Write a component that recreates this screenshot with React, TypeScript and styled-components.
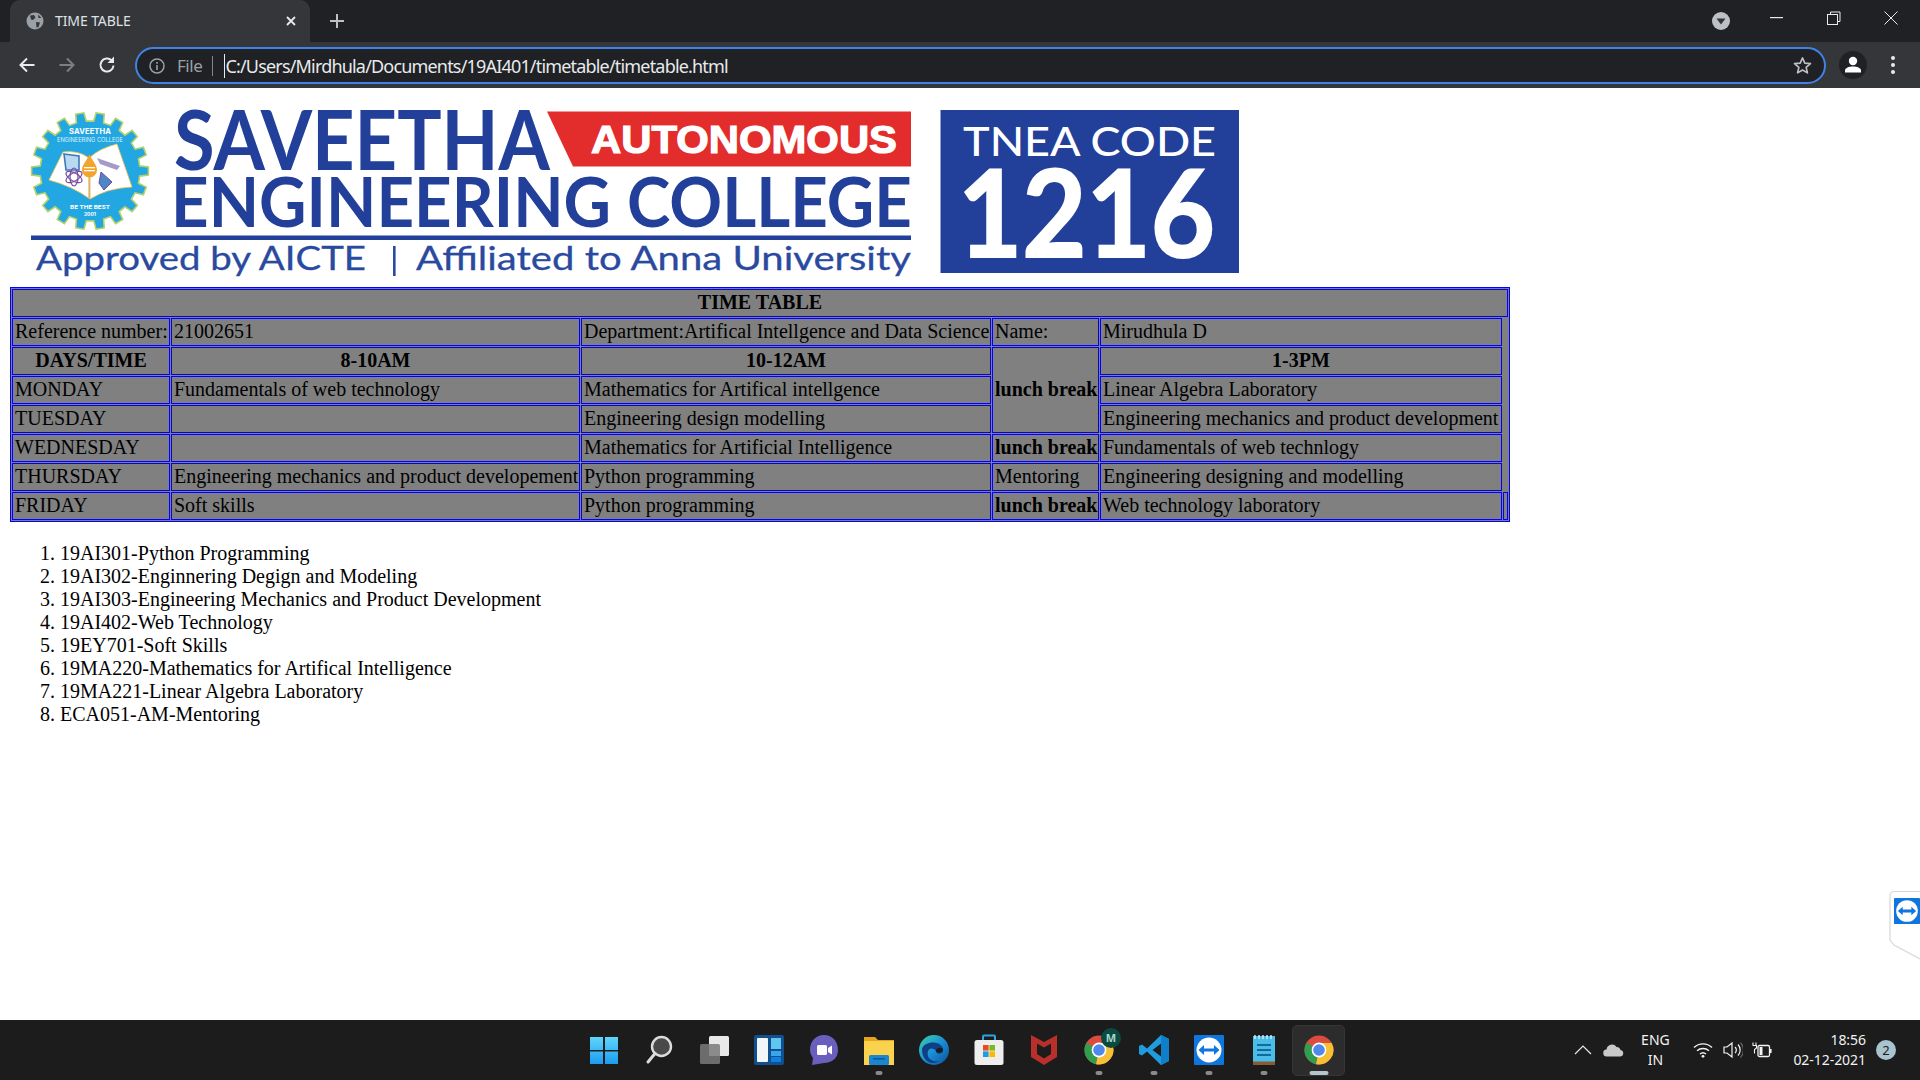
import React from "react";
import styled, { createGlobalStyle } from "styled-components";

const Global = createGlobalStyle`
  html, body { margin: 0; padding: 0; height: 100%; overflow: hidden; background: #fff; }
  #root { height: 100%; }
`;

const Screen = styled.div`
  position: relative; width: 1920px; height: 1080px; display: flex; flex-direction: column; overflow: hidden;
  font-family: "Liberation Serif", serif;
`;

/* ---------- browser chrome ---------- */
const TabStrip = styled.div`
  height: 42px; background: #202124; display: flex; align-items: stretch; padding-left: 10px; flex: none;
`;
const Tab = styled.div`
  width: 300px; background: #35363a; border-radius: 10px 10px 0 0; display: flex; align-items: center;
  padding: 0 13px 0 16px; box-sizing: border-box; gap: 11px; color: #dfe1e5;
  font: 14px/1 "Noto Sans", sans-serif;
`;
const TabTitle = styled.span`flex: 1; letter-spacing: -0.1px; white-space: nowrap;`;
const NewTab = styled.div`width: 54px; display: flex; align-items: center; justify-content: center; color: #bdc1c6;`;
const StripFill = styled.div`flex: 1;`;
const WindowControls = styled.div`display: flex; align-items: center; padding-right: 0;`;
const WinBtn = styled.div<{ $w?: number }>`
  width: ${(p) => p.$w ?? 57}px; height: 36px; display: flex; align-items: center; justify-content: center; color: #e8eaed;
  align-self: flex-start;
`;
const TabSearch = styled.div`width: 54px; display: flex; align-items: center; justify-content: center;`;

const Toolbar = styled.div`
  height: 46px; background: #35363a; display: flex; align-items: center; flex: none; box-sizing: border-box;
  padding-left: 7px;
`;
const NavBtn = styled.div<{ $dim?: boolean }>`
  width: 40px; height: 40px; display: flex; align-items: center; justify-content: center;
  color: ${(p) => (p.$dim ? "#7b7e82" : "#e8eaed")};
`;
const Omnibox = styled.div`
  margin-left: 8px; width: 1691px; height: 37px; box-sizing: border-box; border: 2px solid #4083e6; border-radius: 19px;
  background: #202124; display: flex; align-items: center; padding: 0 0 0 12px; margin-top: 1px;
`;
const SiteInfo = styled.div`display: flex; align-items: center; color: #9aa0a6; font: 17px/1 "Noto Sans", sans-serif; gap: 12px; letter-spacing: -0.45px;`;
const Divider = styled.div`width: 1px; height: 20px; background: #80868b; margin: 0 11px 0 10px;`;
const Url = styled.div`
  flex: 1; color: #e8eaed; font: 18px/1 "Noto Sans", sans-serif; letter-spacing: -0.82px; white-space: nowrap;
  border-left: 1px solid #e8eaed; line-height: 24px; padding-left: 0;
`;
const Star = styled.div`display: flex; margin-right: 12px; color: #bdc1c6;`;
const Profile = styled.div`
  width: 28px; height: 28px; border-radius: 50%; background: #202124; margin-left: 13px; display: flex; align-items: center; justify-content: center;
`;
const Kebab = styled.div`width: 52px; display: flex; justify-content: center; color: #e8eaed;`;

/* ---------- page ---------- */
const Page = styled.main`
  flex: 1; background: #fff; padding: 10px; box-sizing: border-box; color: #000; overflow: hidden; min-height: 0;
  font: 20px/23px "Liberation Serif", serif;
`;
const LogoSvg = styled.svg`display: block; width: 1240px; height: 189px;`;

const Table = styled.table`
  width: 1500px; table-layout: fixed; border: 1px solid #0000ff; border-spacing: 1px; background: #808080;
  font-size: 20px; line-height: 23px;
`;
const Cell = styled.td<{ $bold?: boolean; $center?: boolean }>`
  border: 1px solid #0000ff; height: 28px; padding: 0 ${(p) => (p.$center ? 2 : 0)}px 2px 2px; box-sizing: border-box; white-space: nowrap; overflow: hidden;
  font-weight: ${(p) => (p.$bold ? 700 : 400)};
  text-align: ${(p) => (p.$center ? "center" : "left")};
`;
const SubjectList = styled.ol`margin: 20px 0 0; padding-left: 50px;`;

/* ---------- taskbar ---------- */
const Taskbar = styled.footer`
  height: 60px; background: #1c1c1c; flex: none; display: grid; grid-template-columns: 1fr auto 1fr; align-items: center;
`;
const TaskIcons = styled.div`grid-column: 2; display: flex; height: 100%; padding-left: 2px;`;
const TaskIcon = styled.div<{ $active?: boolean }>`
  position: relative; width: 55px; height: 100%; display: flex; align-items: center; justify-content: center; padding-bottom: 0;
  &::before {
    content: ""; display: ${(p) => (p.$active ? "block" : "none")}; position: absolute; left: 1px; right: 1px; top: 5px; bottom: 4px;
    background: #2c2c2c; border: 1px solid #363636; border-radius: 5px; box-sizing: border-box;
  }
  & > svg { position: relative; flex: none; }
`;
const RunDot = styled.span<{ $active?: boolean }>`
  position: absolute; bottom: 5px; left: 50%; height: 4px; border-radius: 2px; transform: translateX(-50%);
  width: ${(p) => (p.$active ? 19 : 7)}px; background: ${(p) => (p.$active ? "#b4c6cc" : "#8a8a8a")};
`;
const Tray = styled.div`
  grid-column: 3; display: flex; align-items: center; justify-content: flex-end; height: 100%; color: #f2f2f2; padding-right: 24px;
  font: 14px/20px "Noto Sans", sans-serif;
`;
const TraySlot = styled.div<{ $w: number }>`width: ${(p) => p.$w}px; display: flex; justify-content: center; align-items: center;`;
const Lang = styled.div`text-align: center; width: 44px; margin: 0 11px 0 0;`;
const Clock = styled.div`text-align: right; margin-left: 16px; letter-spacing: -0.05px;`;
const Badge = styled.div`
  width: 20px; height: 20px; border-radius: 50%; background: #a9c4ce; color: #1c1c1c; margin-left: 10px;
  font: 13px/20px "Noto Sans", sans-serif; text-align: center; 
`;
const SidePanel = styled.svg`position: absolute; right: 0; top: 890px; width: 31px; height: 70px;`;

/* ---------- logo drawing ---------- */
const gearPoints = (() => {
  const cx = 90, cy = 171, teeth = 18, ro = 58.5, ri = 50;
  const pts: string[] = [];
  for (let i = 0; i < teeth; i++) {
    const a = (i / teeth) * Math.PI * 2, s = (Math.PI * 2) / teeth;
    [[-0.29, ri], [-0.2, ro], [0.2, ro], [0.29, ri]].forEach(([o, r]) => {
      const t = a + o * s;
      pts.push(`${(cx + r * Math.cos(t)).toFixed(1)},${(cy + r * Math.sin(t)).toFixed(1)}`);
    });
  }
  return pts.join(" ");
})();

const Logo = () => (
  <LogoSvg viewBox="10 98 1240 189" role="img">
    <polygon points={gearPoints} fill="#22a7e2" stroke="#b5d26a" strokeWidth="1.6" />
    <path d="M63 152 Q78 150 89 158 Q100 148 117 144 L132 187 Q108 188 90 199 Q72 186 49 180 Z" fill="#fff" stroke="#f0c14a" strokeWidth="0.8" />
    <path d="M64 154 L79 156 L79 170 L66 170 Z" fill="#b9d9f0" stroke="#3f78b8" strokeWidth="1.6" />
    <path d="M97 158 L120 166 L117 170 L100 164 Z" fill="#8a78b4" opacity="0.75" />
    <g fill="none" stroke="#7a4ca0" strokeWidth="1.2">
      <ellipse cx="74" cy="177" rx="9" ry="4" transform="rotate(30 74 177)" />
      <ellipse cx="74" cy="177" rx="9" ry="4" transform="rotate(-30 74 177)" />
      <ellipse cx="74" cy="177" rx="9" ry="4" transform="rotate(90 74 177)" />
    </g>
    <path d="M101 172 L112 182 L104 190 L99 183 Z" fill="#4f86c6" stroke="#6a4aa0" strokeWidth="1" />
    <rect x="88.4" y="176" width="2" height="22" fill="#d9b45a" />
    <path d="M89.5 154 C92 161 97 164 97 170 A7.5 7.5 0 0 1 82 170 C82 164 87 161 89.5 154 Z" fill="#f3a52b" />
    <rect x="84" y="167" width="11" height="1.3" fill="#fff" />
    <rect x="84" y="170" width="11" height="1.3" fill="#fff" />
    <text x="90" y="134" textAnchor="middle" fontFamily="Inter, sans-serif" fontWeight="700" fontSize="7.6" fill="#fff" textLength="42">SAVEETHA</text>
    <text x="90" y="142" textAnchor="middle" fontFamily="Inter, sans-serif" fontSize="5.6" fill="#dff2fb" textLength="66" lengthAdjust="spacingAndGlyphs">ENGINEERING COLLEGE</text>
    <text x="90" y="209" textAnchor="middle" fontFamily="Inter, sans-serif" fontWeight="700" fontSize="5.4" fill="#fff" textLength="40" lengthAdjust="spacingAndGlyphs">BE THE BEST</text>
    <text x="90" y="216" textAnchor="middle" fontFamily="Inter, sans-serif" fontWeight="700" fontSize="5" fill="#fff">2001</text>

    <text x="174" y="170" fontFamily="Lato, sans-serif" fontWeight="700" fontSize="82" fill="#22409a" textLength="376" lengthAdjust="spacingAndGlyphs">SAVEETHA</text>
    <polygon points="547,111.5 911,111.5 911,166.5 573,166.5" fill="#e32d2d" />
    <text x="591" y="153" fontFamily="'Liberation Sans', sans-serif" fontWeight="700" fontSize="39" fill="#fff" stroke="#fff" strokeWidth="1.2" textLength="306" lengthAdjust="spacingAndGlyphs">AUTONOMOUS</text>
    <text x="171" y="226.5" fontFamily="Lato, sans-serif" fontWeight="700" fontSize="69" fill="#22409a" textLength="741" lengthAdjust="spacingAndGlyphs">ENGINEERING COLLEGE</text>
    <rect x="31" y="235.5" width="880" height="4.5" fill="#22409a" />
    <text x="36" y="270" fontFamily="Lato, sans-serif" fontSize="33" fill="#2a4a9f" stroke="#2a4a9f" strokeWidth="0.3" textLength="330" lengthAdjust="spacingAndGlyphs">Approved by AICTE</text>
    <rect x="393" y="246" width="2.6" height="30" fill="#2a4a9f" />
    <text x="416" y="270" fontFamily="Lato, sans-serif" fontSize="33" fill="#2a4a9f" stroke="#2a4a9f" strokeWidth="0.3" textLength="495" lengthAdjust="spacingAndGlyphs">Affiliated to Anna University</text>

    <rect x="940.5" y="110" width="298.5" height="163" fill="#22409a" />
    <text x="963" y="156" fontFamily="Lato, sans-serif" fontWeight="500" fontSize="40" fill="#fff" textLength="253" lengthAdjust="spacingAndGlyphs">TNEA CODE</text>
    <text x="958" y="256.5" fontFamily="Lato, sans-serif" fontWeight="700" fontSize="121" fill="#fff" stroke="#fff" strokeWidth="2" textLength="257" lengthAdjust="spacingAndGlyphs">1216</text>
  </LogoSvg>
);

/* ---------- taskbar glyphs ---------- */
const WinLogo = () => (
  <svg width="30" height="30" viewBox="0 0 30 30">
    <defs><linearGradient id="w" x1="0" y1="0" x2="0" y2="1"><stop offset="0" stopColor="#5fd6fb" /><stop offset="1" stopColor="#1c9cf0" /></linearGradient></defs>
    <path d="M1 2h13v13H1zM16 2h13v13H16zM1 16.5h13V29H1zM16 16.5h13V29H16z" fill="url(#w)" />
  </svg>
);
const SearchIcon = () => (
  <svg width="30" height="30" viewBox="0 0 30 30">
    <circle cx="17.5" cy="11.5" r="9.5" fill="#4a4a4a" stroke="#dcdcdc" strokeWidth="2.4" />
    <path d="M11 18.5 L4 27" stroke="#dcdcdc" strokeWidth="3" strokeLinecap="round" />
  </svg>
);
const TaskView = () => (
  <svg width="32" height="30" viewBox="0 0 32 30">
    <rect x="11" y="1" width="20" height="20" rx="1.5" fill="#e8e8e8" />
    <rect x="2" y="9" width="20" height="20" rx="1.5" fill="#7a7a7a" opacity="0.85" />
  </svg>
);
const Widgets = () => (
  <svg width="30" height="30" viewBox="0 0 30 30">
    <rect x="0" y="0" width="30" height="30" rx="2" fill="#124f8f" />
    <rect x="3" y="3" width="11" height="24" rx="1" fill="#f3f6f9" />
    <rect x="17" y="3" width="10" height="11" fill="#5fc6ef" />
    <rect x="17" y="16" width="10" height="5" fill="#38a6e8" />
    <rect x="17" y="22" width="10" height="5" fill="#0c82e0" />
  </svg>
);
const Chat = () => (
  <svg width="30" height="32" viewBox="0 0 30 32">
    <path d="M15 1 C24 1 29 8 29 16 C29 24 23 29 15 29 L3 31 L4 24 C2 21 1 19 1 16 C1 8 6 1 15 1 Z" fill="#6b5fbe" />
    <rect x="8" y="11" width="10" height="10" rx="1.5" fill="#fff" />
    <path d="M19 14 L23 11.5 V20.5 L19 18 Z" fill="#fff" />
  </svg>
);
const Folder = () => (
  <svg width="30" height="30" viewBox="0 0 30 30">
    <path d="M0 2 h11 l3 3 h16 v5 H0 Z" fill="#e5a51e" />
    <rect x="0" y="6" width="30" height="24" fill="#fbd24e" />
    <rect x="5" y="20" width="20" height="10" rx="1.5" fill="#1b86d0" />
    <rect x="9" y="23" width="12" height="1.6" fill="#0a5a9a" />
  </svg>
);
const Edge = () => (
  <svg width="30" height="30" viewBox="0 0 30 30">
    <defs><linearGradient id="e" x1="0" y1="0" x2="1" y2="1"><stop offset="0" stopColor="#3bd4a3" /><stop offset="0.5" stopColor="#1a90d8" /><stop offset="1" stopColor="#0b4f96" /></linearGradient></defs>
    <circle cx="15" cy="15" r="15" fill="url(#e)" />
    <path d="M3 14 C5 6 22 5 24 14 C25 20 17 20 17 16 C13 11 7 14 9 21 C10 25 15 27 20 26 C12 31 3 26 3 14 Z" fill="#0f3f86" />
    <path d="M17 16 c0 -4 7 -4 7 -1 c0 3 -6 4 -7 1z" fill="#1c1c1c" />
  </svg>
);
const Store = () => (
  <svg width="30" height="32" viewBox="0 0 30 32">
    <path d="M9 6 V2.5 a1 1 0 0 1 1 -1 h10 a1 1 0 0 1 1 1 V6" fill="none" stroke="#2aa5e6" strokeWidth="2" />
    <rect x="0.5" y="6" width="29" height="25" rx="2.5" fill="#eeeeee" />
    <rect x="9" y="11" width="5.6" height="5.6" fill="#ea4a1f" />
    <rect x="15.4" y="11" width="5.6" height="5.6" fill="#7db820" />
    <rect x="9" y="17.4" width="5.6" height="5.6" fill="#1c9ce8" />
    <rect x="15.4" y="17.4" width="5.6" height="5.6" fill="#fdb900" />
  </svg>
);
const McAfee = () => (
  <svg width="28" height="32" viewBox="0 0 28 32">
    <path d="M1 1 L14 8 L27 1 V23 L14 31 L1 23 Z" fill="#b92f2c" />
    <path d="M7 9.5 L14 13.5 L21 9.5 V20 L14 24.5 L7 20 Z" fill="#1c1c1c" />
  </svg>
);
const ChromeWheel = () => (
  <>
    <circle cx="15" cy="15" r="14.5" fill="#dd4b3e" />
    <path d="M15 15 L2.4 7.7 A14.5 14.5 0 0 0 12 29.2 Z" fill="#2f9e4f" />
    <path d="M15 15 L12 29.2 A14.5 14.5 0 0 0 27.6 8 L15 8 Z" fill="#f5c033" />
    <circle cx="15" cy="15" r="7.4" fill="#fff" />
    <circle cx="15" cy="15" r="5.8" fill="#4f89ee" />
  </>
);
const Chrome = () => (
  <svg width="30" height="30" viewBox="0 0 30 30"><ChromeWheel /></svg>
);
const ChromeBadged = () => (
  <svg width="44" height="44" viewBox="0 0 44 44">
    <g transform="translate(7 7)"><ChromeWheel /></g>
    <circle cx="34" cy="10" r="10" fill="#0c4a40" />
    <text x="34" y="14" textAnchor="middle" fontFamily="'Noto Sans', sans-serif" fontSize="11" fontWeight="700" fill="#a4d8cc">M</text>
  </svg>
);
const VSCode = () => (
  <svg width="30" height="30" viewBox="0 0 30 30">
    <path d="M22 0 L30 4 V26 L22 30 L8 16.5 L3 20.5 L0 19 V11 L3 9.5 L8 13.5 Z M22 8.5 L13.5 15 L22 21.5 Z" fill="#1f9ce0" fillRule="evenodd" />
    <path d="M22 0 L30 4 V26 L22 30 V21.5 V8.5 Z" fill="#0f7fca" />
  </svg>
);
const TeamGlyph = ({ size }: { size: number }) => (
  <svg width={size} height={size} viewBox="0 0 30 30">
    <rect width="30" height="30" rx="1" fill="#0f76e0" />
    <circle cx="15" cy="15" r="12.5" fill="#fff" />
    <path d="M4.5 15 L10 10 V13.4 H20 V10 L25.5 15 L20 20 V16.6 H10 V20 Z" fill="#0f76e0" />
  </svg>
);
const Notepad = () => (
  <svg width="24" height="32" viewBox="0 0 24 32">
    <rect x="1" y="2" width="22" height="29" fill="#4bbce8" />
    <rect x="1" y="27.5" width="22" height="3.5" fill="#8a5a30" />
    <path d="M3 1v4M7 1v4M11 1v4M15 1v4M19 1v4" stroke="#d6eef8" strokeWidth="1.4" />
    <path d="M5 11h14M5 16h14M5 21h14" stroke="#0f6a9e" strokeWidth="2" />
  </svg>
);

const rows: { day: string; a: string; b: string; lunch: React.ReactNode | null; d: string; extra?: boolean }[] = [
  { day: "TUESDAY", a: "", b: "Engineering design modelling", lunch: null, d: "Engineering mechanics and product development" },
  { day: "WEDNESDAY", a: "", b: "Mathematics for Artificial Intelligence", lunch: <b>lunch break</b>, d: "Fundamentals of web technlogy" },
  { day: "THURSDAY", a: "Engineering mechanics and product developement", b: "Python programming", lunch: "Mentoring", d: "Engineering designing and modelling" },
  { day: "FRIDAY", a: "Soft skills", b: "Python programming", lunch: <b>lunch break</b>, d: "Web technology laboratory", extra: true },
];

const subjects = [
  "19AI301-Python Programming",
  "19AI302-Enginnering Degign and Modeling",
  "19AI303-Engineering Mechanics and Product Development",
  "19AI402-Web Technology",
  "19EY701-Soft Skills",
  "19MA220-Mathematics for Artifical Intelligence",
  "19MA221-Linear Algebra Laboratory",
  "ECA051-AM-Mentoring",
];

export default function App() {
  return (
    <Screen>
      <Global />
      <TabStrip>
        <Tab>
          <svg width="18" height="18" viewBox="0 0 18 18">
            <circle cx="9" cy="9" r="8.5" fill="#9aa0a6" />
            <path d="M4 3.5 L8 3 L9.5 5.5 L7 8 L5 7.5 Z M10 10 L14 10.5 L12.5 15 L10.5 15.5 Z M12 2.5 L15.5 6 L12.5 6 Z" fill="#35363a" />
          </svg>
          <TabTitle>TIME TABLE</TabTitle>
          <svg width="12" height="12" viewBox="0 0 12 12"><path d="M2 2l8 8M10 2l-8 8" stroke="#e8eaed" strokeWidth="1.8" /></svg>
        </Tab>
        <NewTab>
          <svg width="16" height="16" viewBox="0 0 16 16"><path d="M8 1v14M1 8h14" stroke="#bdc1c6" strokeWidth="2" /></svg>
        </NewTab>
        <StripFill />
        <WindowControls>
          <TabSearch>
            <svg width="18" height="18" viewBox="0 0 18 18"><circle cx="9" cy="9" r="9" fill="#bdc1c6" /><path d="M4.5 6.5h9L9 12.5z" fill="#35363a" /></svg>
          </TabSearch>
          <WinBtn><svg width="13" height="2" viewBox="0 0 13 2"><rect width="13" height="1.2" fill="#e8eaed" /></svg></WinBtn>
          <WinBtn>
            <svg width="14" height="14" viewBox="0 0 14 14"><path d="M3.5 3V1h9.5v9.500h-2" fill="none" stroke="#e8eaed" /><rect x="0.5" y="3.500" width="10" height="10" fill="none" stroke="#e8eaed" /></svg>
          </WinBtn>
          <WinBtn $w={58}><svg width="14" height="14" viewBox="0 0 14 14"><path d="M.5.500l13 13M13.500.500l-13 13" stroke="#e8eaed" /></svg></WinBtn>
        </WindowControls>
      </TabStrip>

      <Toolbar>
        <NavBtn>
          <svg width="18" height="18" viewBox="0 0 18 18"><path d="M16.500 9H2.500M9 2.500L2.500 9 9 15.500" fill="none" stroke="currentColor" strokeWidth="2" /></svg>
        </NavBtn>
        <NavBtn $dim>
          <svg width="18" height="18" viewBox="0 0 18 18"><path d="M1.500 9h14M9 2.500L15.500 9 9 15.500" fill="none" stroke="currentColor" strokeWidth="2" /></svg>
        </NavBtn>
        <NavBtn>
          <svg width="20" height="20" viewBox="0 0 20 20"><path d="M16.500 10.500A6.500 6.500 0 1 1 14.600 5.400" fill="none" stroke="currentColor" strokeWidth="2" /><path d="M17 1.500V8h-6.500z" fill="currentColor" /></svg>
        </NavBtn>
        <Omnibox>
          <SiteInfo>
            <svg width="16" height="16" viewBox="0 0 16 16"><circle cx="8" cy="8" r="7" fill="none" stroke="currentColor" strokeWidth="1.5" /><path d="M8 7v5M8 4v1.800" stroke="currentColor" strokeWidth="1.600" /></svg>
            File
          </SiteInfo>
          <Divider />
          <Url>C:/Users/Mirdhula/Documents/19AI401/timetable/timetable.html</Url>
          <Star>
            <svg width="19" height="19" viewBox="0 0 20 20"><path d="M10 2l2.400 5.500 6 .500-4.600 3.900 1.400 5.900L10 14.700 4.800 17.800l1.400-5.900L1.600 8l6-.500z" fill="none" stroke="currentColor" strokeWidth="1.700" strokeLinejoin="round" /></svg>
          </Star>
        </Omnibox>
        <Profile>
          <svg width="18" height="18" viewBox="0 0 18 18"><circle cx="9" cy="5" r="4.200" fill="#fff" /><path d="M1 16.500v-2c0-2.500 4-4 8-4s8 1.500 8 4v2z" fill="#fff" /></svg>
        </Profile>
        <Kebab>
          <svg width="6" height="20" viewBox="0 0 6 20"><circle cx="3" cy="3" r="2" fill="currentColor" /><circle cx="3" cy="10" r="2" fill="currentColor" /><circle cx="3" cy="17" r="2" fill="currentColor" /></svg>
        </Kebab>
      </Toolbar>

      <Page>
        <Logo />
        <Table>
          <colgroup>
            <col style={{ width: 158 }} /><col style={{ width: 409 }} /><col style={{ width: 410 }} /><col style={{ width: 107 }} /><col style={{ width: 402 }} /><col />
          </colgroup>
          <tbody>
            <tr><Cell colSpan={6} $bold $center>TIME TABLE</Cell></tr>
            <tr>
              <Cell>Reference number:</Cell><Cell>21002651</Cell><Cell>Department:Artifical Intellgence and Data Science</Cell><Cell>Name:</Cell><Cell colSpan={1}>Mirudhula D</Cell>
            </tr>
            <tr>
              <Cell $bold $center>DAYS/TIME</Cell><Cell $bold $center>8-10AM</Cell><Cell $bold $center>10-12AM</Cell>
              <Cell rowSpan={3} $bold>lunch break</Cell>
              <Cell $bold $center>1-3PM</Cell>
            </tr>
            <tr>
              <Cell>MONDAY</Cell><Cell>Fundamentals of web technology</Cell><Cell>Mathematics for Artifical intellgence</Cell><Cell>Linear Algebra Laboratory</Cell>
            </tr>
            {rows.map((r) => (
              <tr key={r.day}>
                <Cell>{r.day}</Cell><Cell>{r.a}</Cell><Cell>{r.b}</Cell>
                {r.lunch !== null && <Cell>{r.lunch}</Cell>}
                <Cell>{r.d}</Cell>
                {r.extra && <Cell />}
              </tr>
            ))}
          </tbody>
        </Table>
        <SubjectList>
          {subjects.map((s) => <li key={s}>{s}</li>)}
        </SubjectList>
      </Page>

      <Taskbar>
        <TaskIcons>
          <TaskIcon><WinLogo /></TaskIcon>
          <TaskIcon><SearchIcon /></TaskIcon>
          <TaskIcon><TaskView /></TaskIcon>
          <TaskIcon><Widgets /></TaskIcon>
          <TaskIcon><Chat /></TaskIcon>
          <TaskIcon><Folder /><RunDot /></TaskIcon>
          <TaskIcon><Edge /></TaskIcon>
          <TaskIcon><Store /></TaskIcon>
          <TaskIcon><McAfee /></TaskIcon>
          <TaskIcon><ChromeBadged /><RunDot /></TaskIcon>
          <TaskIcon><VSCode /><RunDot /></TaskIcon>
          <TaskIcon><TeamGlyph size={30} /><RunDot /></TaskIcon>
          <TaskIcon><Notepad /><RunDot /></TaskIcon>
          <TaskIcon $active><Chrome /><RunDot $active /></TaskIcon>
        </TaskIcons>
        <Tray>
          <TraySlot $w={30}><svg width="18" height="10" viewBox="0 0 18 10"><path d="M1 9l8-8 8 8" fill="none" stroke="#e8e8e8" strokeWidth="1.200" /></svg></TraySlot>
          <TraySlot $w={31}><svg width="21" height="14" viewBox="0 0 21 14"><path d="M4 13.500a3.500 3.500 0 0 1-.5-7A5.500 5.500 0 0 1 13.500 4a4 4 0 0 1 4 3 3.300 3.300 0 0 1 0 6.500z" fill="#c9c9c9" /></svg></TraySlot>
          <TraySlot $w={4} />
          <Lang>ENG<br />IN</Lang>
          <TraySlot $w={30}><svg width="20" height="16" viewBox="0 0 20 16"><path d="M1 5.500a13 13 0 0 1 18 0M4 8.800a9 9 0 0 1 12 0M7 12a4.500 4.500 0 0 1 6 0" fill="none" stroke="#f2f2f2" strokeWidth="1.400" /><circle cx="10" cy="14.300" r="1.400" fill="#f2f2f2" /></svg></TraySlot>
          <TraySlot $w={29}><svg width="20" height="18" viewBox="0 0 20 18"><path d="M1 6h3l5-4v14l-5-4H1z" fill="none" stroke="#f2f2f2" strokeWidth="1.200" /><path d="M12 6a4 4 0 0 1 0 6M15 3.500a8 8 0 0 1 0 11" fill="none" stroke="#f2f2f2" strokeWidth="1.200" /><path d="M17.500 1.500a11 11 0 0 1 0 15" fill="none" stroke="#6a6a6a" strokeWidth="1.100" /></svg></TraySlot>
          <TraySlot $w={30}><svg width="20" height="16" viewBox="0 0 20 16"><rect x="6" y="3.500" width="11.500" height="11" rx="1.500" fill="none" stroke="#f2f2f2" strokeWidth="1.300" /><rect x="18" y="7" width="1.600" height="4" fill="#f2f2f2" /><rect x="7.500" y="5" width="3" height="8" fill="#f2f2f2" /><path d="M1 .500v3M4 .500v3M.5 3.500h4v2.500l-2 1.500v4" fill="none" stroke="#f2f2f2" strokeWidth="1.100" /></svg></TraySlot>
          <Clock>18:56<br />02-12-2021</Clock>
          <Badge>2</Badge>
        </Tray>
      </Taskbar>

      <SidePanel viewBox="0 0 31 70">
        <path d="M31 1.500H5a4 4 0 0 0-4 4V50l4 5 26 14" fill="#fff" stroke="#d8d8d8" strokeWidth="1.200" />
        <g transform="translate(5 8)"><TeamGlyph size={26} /></g>
      </SidePanel>
    </Screen>
  );
}
